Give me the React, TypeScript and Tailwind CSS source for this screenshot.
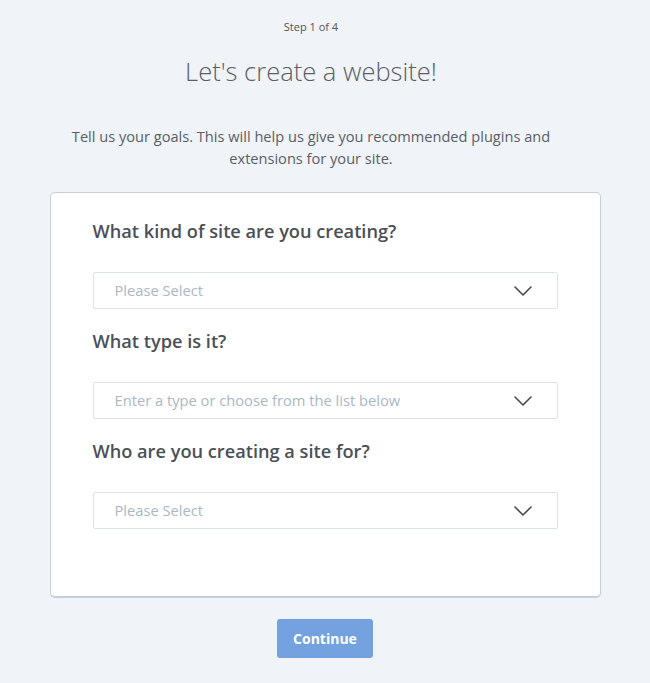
import React from "react";

interface SelectFieldProps {
  label: string;
  placeholder: string;
}

const Chevron = () => (
  <svg width="18" height="10" viewBox="0 0 18 10" fill="none" className="shrink-0">
    <path d="M1 1l8 8 8-8" stroke="#454a50" strokeWidth="1.6" strokeLinecap="round" strokeLinejoin="round" />
  </svg>
);

const SelectField = ({ label, placeholder }: SelectFieldProps) => {
  return (
    <div className="flex flex-col">
      <label className="text-[18.2px] leading-6 font-semibold text-[#4b5057]">{label}</label>
      <div className="mt-[29px] h-[37px] flex items-center justify-between border border-[#dde2e7] rounded-[2px] bg-white pl-[21px] pr-[25px]">
        <span className="text-[14.7px] text-[#a9b8c4]">{placeholder}</span>
        <Chevron />
      </div>
    </div>
  );
};

export default function App() {
  return (
    <div
      className="min-h-screen bg-[#f0f3f7] flex flex-col items-center pt-[19px] pb-8 text-[#555a60]"
      style={{ fontFamily: '"Open Sans", "Noto Sans", sans-serif' }}
    >
      {/* header sits a little left of the card's centre */}
      <div className="w-full flex flex-col items-center pr-[28px]">
        <p className="text-[11px] leading-4 text-[#555]">Step 1 of 4</p>
        <h1 className="mt-[18px] text-[25.5px] leading-9 font-light text-[#5a5f66]">Let's create a website!</h1>
        <p className="mt-[36px] max-w-[500px] text-center text-[14.6px] leading-[22px] text-[#5a5f66]">
          Tell us your goals. This will help us give you recommended plugins and extensions for your site.
        </p>
      </div>
      <div className="mt-[23px] w-[551px] bg-white border border-[#c6ced7] border-b-2 rounded-[5px] px-[42px] pt-[26px] pb-[67px] flex flex-col gap-[20px]">
        <SelectField label="What kind of site are you creating?" placeholder="Please Select" />
        <SelectField label="What type is it?" placeholder="Enter a type or choose from the list below" />
        <SelectField label="Who are you creating a site for?" placeholder="Please Select" />
      </div>
      <button className="mt-[21px] w-[96px] h-[39px] rounded-[3px] bg-[#74a2e0] text-white text-[14px] font-bold">
        Continue
      </button>
    </div>
  );
}
